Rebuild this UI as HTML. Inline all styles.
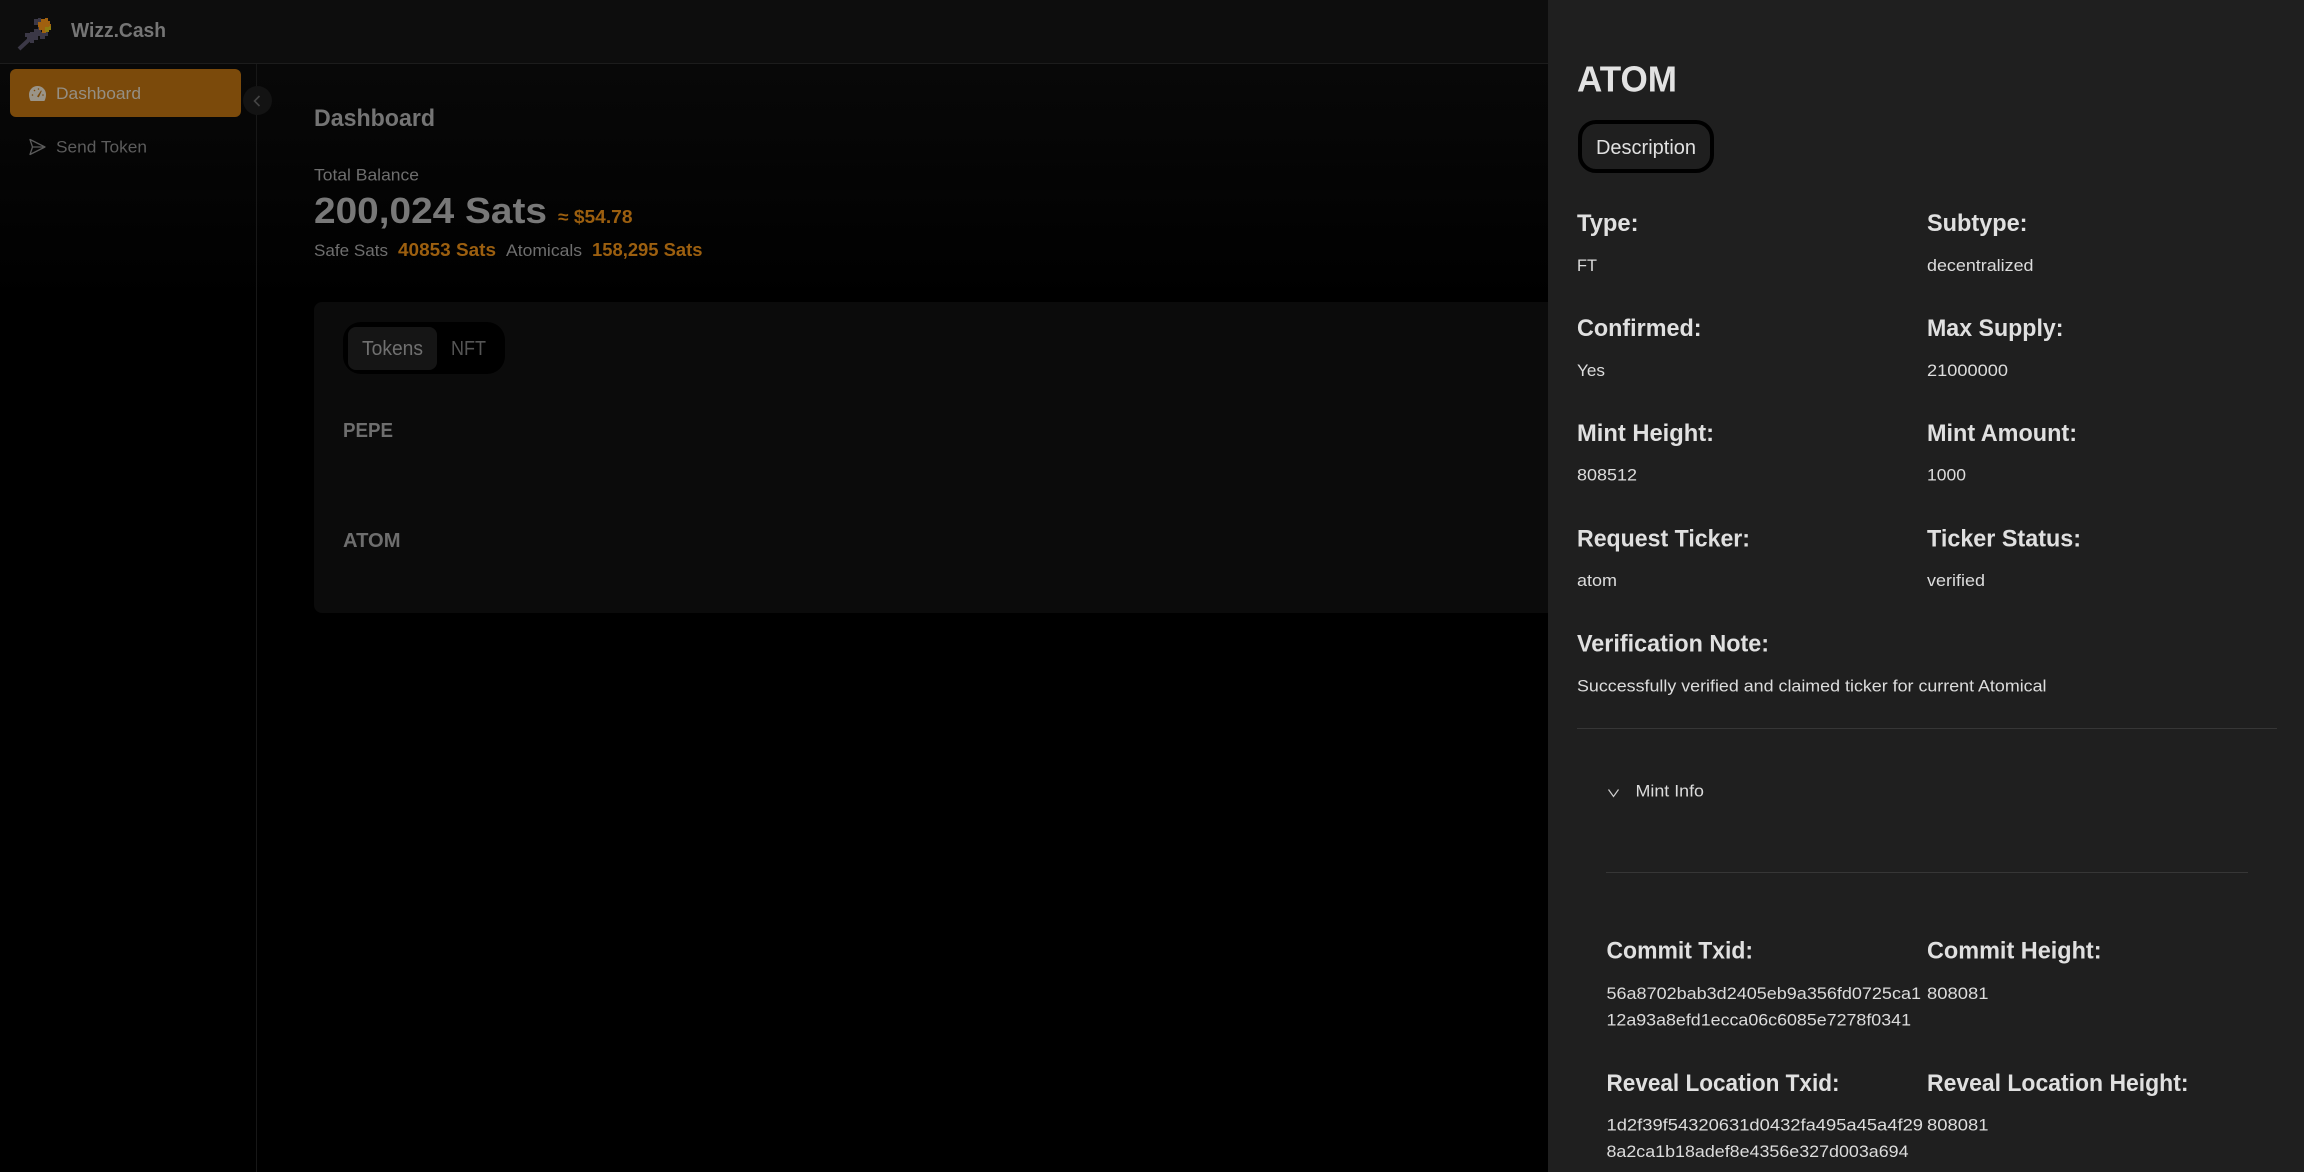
<!DOCTYPE html>
<html lang="en">
<head>
<meta charset="utf-8">
<title>Wizz.Cash</title>
<style>
html,body{margin:0;padding:0;background:#000;}
#app{position:relative;width:2304px;height:1172px;overflow:hidden;background:#000;font-family:"Liberation Sans",sans-serif;}
.b{position:absolute;box-sizing:border-box;}
#header{left:0;top:0;width:1548px;height:64px;background:#0d0d0d;border-bottom:1px solid #1c1c1c;}
#shade{left:0;top:64px;width:1548px;height:240px;background:linear-gradient(#080808,#000);}
#vline{left:256px;top:64px;width:1px;height:1108px;background:#171717;}
#menu1{left:10px;top:69px;width:231px;height:48px;background:#7b4a0b;border-radius:6px;}
#toggle{left:243px;top:86px;width:29px;height:29px;border-radius:50%;background:#131313;}
#card{left:314px;top:302px;width:1300px;height:311px;background:#0b0b0b;border-radius:8px;}
#tabs{left:343px;top:322px;width:162px;height:52px;background:#000;border-radius:18px;}
#tab1{left:348px;top:327px;width:89px;height:43px;background:#151515;border-radius:8px;}
#panel{left:1548px;top:0;width:756px;height:1172px;background:#1f1f1f;}
#desc{left:1578px;top:120px;width:136px;height:53px;border:4px solid #000;border-radius:18px;background:#1f1f1f;}
#hr1{left:1577px;top:728px;width:700px;height:1px;background:#363636;}
#hr2{left:1606px;top:872px;width:642px;height:1px;background:#363636;}
svg{position:absolute;left:0;top:0;}
text{font-family:"Liberation Sans",sans-serif;}
.l{font-size:24px;font-weight:700;fill:#e0e0e0;}
.v{font-size:17px;fill:#dcdcdc;}
.o{font-size:18px;font-weight:700;fill:#9c5f0f;}
.g{font-size:17px;fill:#6e6e6e;}
</style>
</head>
<body>
<div id="app">
  <div class="b" id="shade"></div>
  <div class="b" id="header"></div>
  <div class="b" id="vline"></div>
  <div class="b" id="menu1"></div>
  <div class="b" id="toggle"></div>
  <div class="b" id="card"></div>
  <div class="b" id="tabs"></div>
  <div class="b" id="tab1"></div>
  <div class="b" id="panel"></div>
  <div class="b" id="desc"></div>
  <div class="b" id="hr1"></div>
  <div class="b" id="hr2"></div>

  <svg width="2304" height="1172" viewBox="0 0 2304 1172" xmlns="http://www.w3.org/2000/svg">
    <!-- logo -->
    <g>
      <path d="M19 49L33 36" stroke="#3b3846" stroke-width="4" fill="none"/>
      <path d="M30 32h4v-3h4v-4h-4v-6h4v-1h3v14h7v4h-3v3h-5v-3h-2v4h-4v3h-4v-3h-3v-3h-2v-4h5z" fill="#3b3846"/>
      <path d="M38 22h3v-3h4v-1h3v3h2v3h1v3h-2v3h-3v3h-4v-3h-3v-3h-1z" fill="#a0600f"/>
      <path d="M45 27h4v-1h2v4h-2v2h-4z" fill="#8f7d10"/>
    </g>
    <text x="71" y="37" font-size="20" font-weight="700" fill="#757575" textLength="95" lengthAdjust="spacingAndGlyphs">Wizz.Cash</text>

    <!-- menu icons -->
    <path d="M29 94.500a8.500 8.500 0 0 1 17 0c0 2.600-.6 4.700-1.600 6.500H30.600c-1-1.800-1.600-3.900-1.600-6.500z" fill="#9a9488"/>
    <g fill="#7b4a0b">
      <circle cx="32.500" cy="95" r=".8"/><circle cx="34.500" cy="90.500" r=".8"/><circle cx="38.500" cy="89" r=".8"/><circle cx="43" cy="95" r=".8"/>
      <path d="M37 96.500l4-6 .8.400-3 6.500z"/>
    </g>
    <text x="56" y="99" font-size="17" fill="#958f84" textLength="85" lengthAdjust="spacingAndGlyphs">Dashboard</text>
    <path d="M30 139.500L45 147L30 154.500L32.500 147Z M32.500 147H45" fill="none" stroke="#5a5a5a" stroke-width="1.300" stroke-linejoin="round"/>
    <text x="56" y="152.500" font-size="17" fill="#5c5c5c" textLength="91" lengthAdjust="spacingAndGlyphs">Send Token</text>
    <path d="M259.500 96L254.500 101L259.500 106" fill="none" stroke="#444" stroke-width="1.600"/>

    <!-- main -->
    <text x="314" y="126" font-size="24" font-weight="700" fill="#747474" textLength="121" lengthAdjust="spacingAndGlyphs">Dashboard</text>
    <text x="314" y="180.500" class="g" textLength="105" lengthAdjust="spacingAndGlyphs">Total Balance</text>
    <text x="314" y="223" font-size="36" font-weight="700" fill="#787878" textLength="233" lengthAdjust="spacingAndGlyphs">200,024 Sats</text>
    <text x="558" y="223" class="o" textLength="74.500" lengthAdjust="spacingAndGlyphs">≈ $54.78</text>
    <text x="314" y="256" class="g" textLength="74" lengthAdjust="spacingAndGlyphs">Safe Sats</text>
    <text x="398" y="256" class="o" textLength="98" lengthAdjust="spacingAndGlyphs">40853 Sats</text>
    <text x="506" y="256" class="g" textLength="76" lengthAdjust="spacingAndGlyphs">Atomicals</text>
    <text x="592" y="256" class="o" textLength="110.500" lengthAdjust="spacingAndGlyphs">158,295 Sats</text>

    <text x="362" y="355" font-size="20" fill="#707070" textLength="61" lengthAdjust="spacingAndGlyphs">Tokens</text>
    <text x="451" y="355" font-size="20" fill="#555" textLength="35" lengthAdjust="spacingAndGlyphs">NFT</text>
    <text x="343" y="437" font-size="20" font-weight="700" fill="#6e6e6e" textLength="50" lengthAdjust="spacingAndGlyphs">PEPE</text>
    <text x="343" y="547" font-size="20" font-weight="700" fill="#6e6e6e" textLength="57.500" lengthAdjust="spacingAndGlyphs">ATOM</text>

    <!-- panel -->
    <text x="1577" y="91.500" font-size="36" font-weight="700" fill="#e2e2e2" textLength="100" lengthAdjust="spacingAndGlyphs">ATOM</text>
    <text x="1596" y="154" font-size="20" fill="#e0e0e0" textLength="100" lengthAdjust="spacingAndGlyphs">Description</text>

    <text x="1577" y="231" class="l" textLength="61.500" lengthAdjust="spacingAndGlyphs">Type:</text>
    <text x="1927" y="231" class="l" textLength="100.500" lengthAdjust="spacingAndGlyphs">Subtype:</text>
    <text x="1577" y="271" class="v" textLength="20" lengthAdjust="spacingAndGlyphs">FT</text>
    <text x="1927" y="271" class="v" textLength="106.500" lengthAdjust="spacingAndGlyphs">decentralized</text>

    <text x="1577" y="336" class="l" textLength="124.500" lengthAdjust="spacingAndGlyphs">Confirmed:</text>
    <text x="1927" y="336" class="l" textLength="136.500" lengthAdjust="spacingAndGlyphs">Max Supply:</text>
    <text x="1577" y="376" class="v" textLength="28" lengthAdjust="spacingAndGlyphs">Yes</text>
    <text x="1927" y="376" class="v" textLength="81" lengthAdjust="spacingAndGlyphs">21000000</text>

    <text x="1577" y="441" class="l" textLength="137" lengthAdjust="spacingAndGlyphs">Mint Height:</text>
    <text x="1927" y="441" class="l" textLength="150" lengthAdjust="spacingAndGlyphs">Mint Amount:</text>
    <text x="1577" y="480.500" class="v" textLength="60" lengthAdjust="spacingAndGlyphs">808512</text>
    <text x="1927" y="480.500" class="v" textLength="39" lengthAdjust="spacingAndGlyphs">1000</text>

    <text x="1577" y="546.500" class="l" textLength="173" lengthAdjust="spacingAndGlyphs">Request Ticker:</text>
    <text x="1927" y="546.500" class="l" textLength="154" lengthAdjust="spacingAndGlyphs">Ticker Status:</text>
    <text x="1577" y="586" class="v" textLength="40" lengthAdjust="spacingAndGlyphs">atom</text>
    <text x="1927" y="586" class="v" textLength="58" lengthAdjust="spacingAndGlyphs">verified</text>

    <text x="1577" y="651.500" class="l" textLength="192" lengthAdjust="spacingAndGlyphs">Verification Note:</text>
    <text x="1577" y="691.500" class="v" textLength="469.500" lengthAdjust="spacingAndGlyphs">Successfully verified and claimed ticker for current Atomical</text>

    <path d="M1608.500 789.500L1613.500 796.500L1618.500 789.500" fill="none" stroke="#cfcfcf" stroke-width="1.200"/>
    <text x="1635.500" y="796.500" class="v" textLength="68.500" lengthAdjust="spacingAndGlyphs">Mint Info</text>

    <text x="1606.500" y="958.500" class="l" textLength="146.500" lengthAdjust="spacingAndGlyphs">Commit Txid:</text>
    <text x="1927" y="958.500" class="l" textLength="174.500" lengthAdjust="spacingAndGlyphs">Commit Height:</text>
    <text x="1606.500" y="999" class="v" textLength="314.500" lengthAdjust="spacingAndGlyphs">56a8702bab3d2405eb9a356fd0725ca1</text>
    <text x="1606.500" y="1025.500" class="v" textLength="304.500" lengthAdjust="spacingAndGlyphs">12a93a8efd1ecca06c6085e7278f0341</text>
    <text x="1927" y="999" class="v" textLength="61.500" lengthAdjust="spacingAndGlyphs">808081</text>

    <text x="1606.500" y="1091" class="l" textLength="233" lengthAdjust="spacingAndGlyphs">Reveal Location Txid:</text>
    <text x="1927" y="1091" class="l" textLength="261.500" lengthAdjust="spacingAndGlyphs">Reveal Location Height:</text>
    <text x="1606.500" y="1130.500" class="v" textLength="316.500" lengthAdjust="spacingAndGlyphs">1d2f39f54320631d0432fa495a45a4f29</text>
    <text x="1606.500" y="1157" class="v" textLength="302" lengthAdjust="spacingAndGlyphs">8a2ca1b18adef8e4356e327d003a694</text>
    <text x="1927" y="1130.500" class="v" textLength="61.500" lengthAdjust="spacingAndGlyphs">808081</text>
  </svg>
</div>
</body>
</html>
